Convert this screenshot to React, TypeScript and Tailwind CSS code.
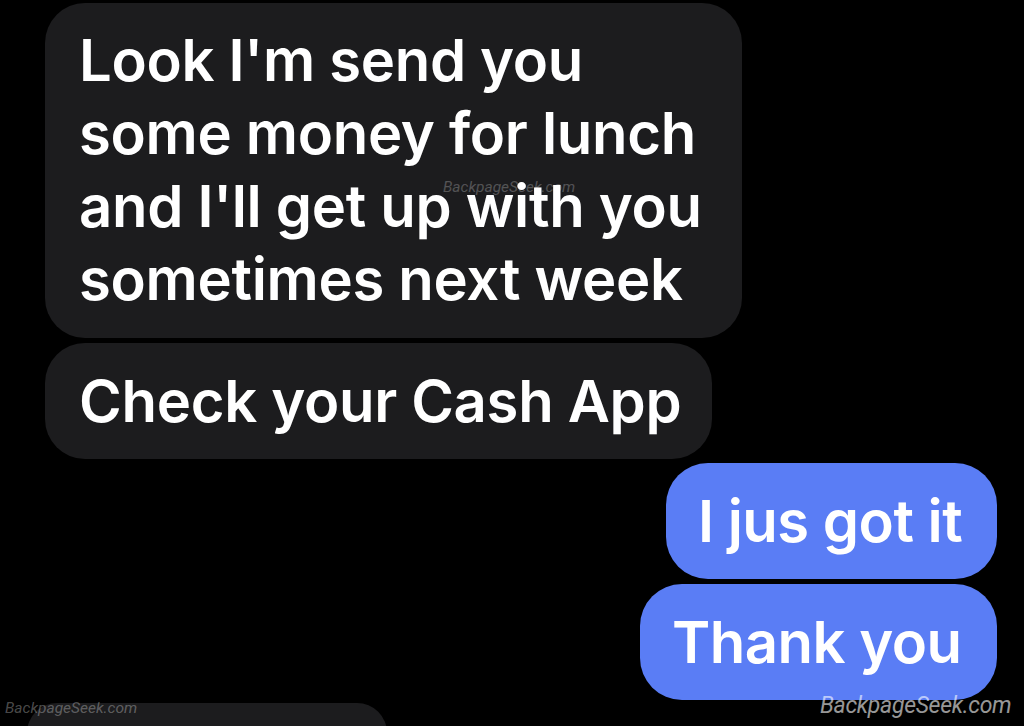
export default function App() {
  return (
    <div
      className="relative w-[1024px] h-[726px] overflow-hidden bg-black text-white"
      style={{ fontFamily: "Inter, 'Noto Sans', Roboto, sans-serif" }}
    >
      <div className="flex flex-col pt-[3px]">
        <div className="ml-[45px] w-[697px] h-[335px] rounded-[40px] bg-[#1c1c1e] pl-[34px] pt-[21px] text-[58px] leading-[73px] font-semibold tracking-[-0.3px]">
          <div>Look I'm send you</div>
          <div>some money for lunch</div>
          <div>and I'll get up with you</div>
          <div>sometimes next week</div>
        </div>
        <div className="mt-[5px] ml-[45px] w-[667px] h-[116px] rounded-[40px] bg-[#1c1c1e] pl-[34px] flex items-center text-[58px] font-semibold tracking-[-0.3px]">
          Check your Cash App
        </div>
        <div className="mt-[4px] self-end mr-[27px] w-[331px] h-[116px] rounded-[42px] bg-[#5a7df5] flex items-center pl-[32px] text-[58px] font-semibold tracking-[-0.5px]">
          I jus got it
        </div>
        <div className="mt-[5px] self-end mr-[27px] w-[357px] h-[116px] rounded-[42px] bg-[#5a7df5] flex items-center pl-[32px] text-[58px] font-semibold tracking-[-0.5px]">
          Thank you
        </div>
        <div className="mt-[3px] ml-[27px] w-[360px] h-[40px] rounded-t-[30px] bg-[#1c1c1e]" />
      </div>
      <div
        className="absolute left-[443px] top-[176px] text-[15.5px] italic text-white/25"
        style={{ fontFamily: "Roboto, sans-serif" }}
      >
        BackpageSeek.com
      </div>
      <div
        className="absolute left-[5px] top-[697px] text-[15.5px] italic text-white/30"
        style={{ fontFamily: "Roboto, sans-serif" }}
      >
        BackpageSeek.com
      </div>
      <div
        className="absolute left-[820px] top-[689px] text-[23px] italic text-white/60 tracking-[-0.3px]"
        style={{ fontFamily: "Roboto, sans-serif" }}
      >
        BackpageSeek.com
      </div>
    </div>
  );
}
